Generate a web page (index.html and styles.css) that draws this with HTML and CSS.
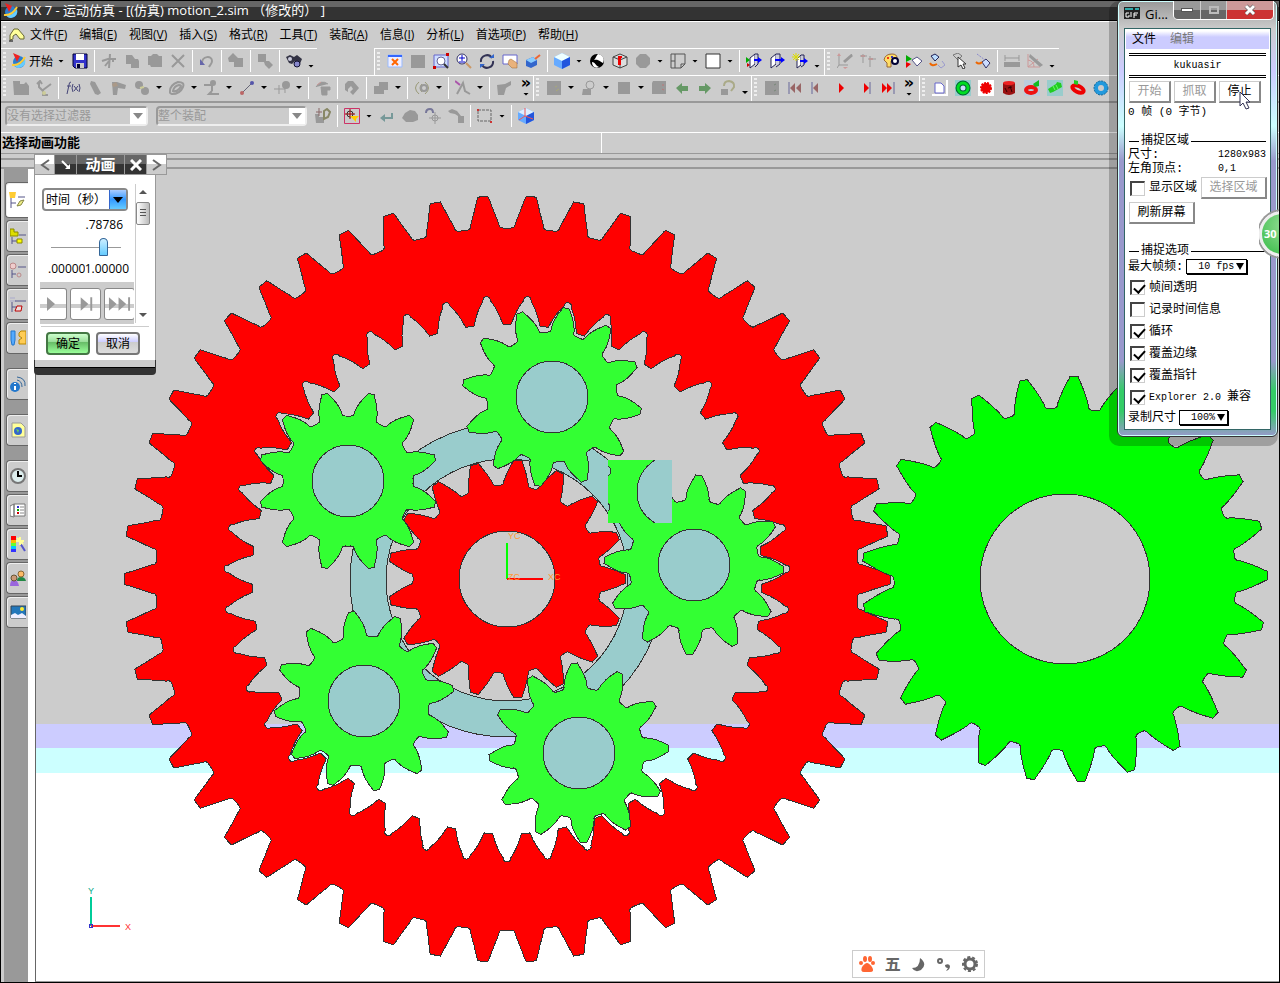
FILE: index.html
```
<!DOCTYPE html>
<html lang="zh-CN">
<head>
    <meta charset="UTF-8">
    <meta name="viewport" content="width=device-width, initial-scale=1.0">
    <title>NX 7 - 运动仿真</title>
    <link rel="stylesheet" href="styles.css">
</head>
<body>

    <header class="title-bar">
        <svg class="logo" viewBox="0 0 16 16"><circle cx="8" cy="9" r="6" fill="#2a7fd0"/><path d="M3 11q6 3 11-5q2 7-6 9q-4 0-5-4z" fill="#6cf"/><path d="M1 12q8 1 13-8" fill="none" stroke="#fc3" stroke-width="2"/><path d="M2 0l7 3-3 6z" fill="#e22"/></svg>
        <span>NX 7 - 运动仿真 - [(仿真) motion_2.sim （修改的） ]</span>
    </header>

    <nav class="menu-bar">
        <i class="grip"></i>
        <svg class="menu-icon" viewBox="0 0 18 16"><path d="M2 13V8l4-6h4l6 7v3h-4l-4-5-3 2v3z" fill="#ff9" stroke="#663"/><path d="M1 14h4" stroke="#000"/></svg>
        <a href="#">文件(<u>F</u>)</a>
        <a href="#">编辑(<u>E</u>)</a>
        <a href="#">视图(<u>V</u>)</a>
        <a href="#">插入(<u>S</u>)</a>
        <a href="#">格式(<u>R</u>)</a>
        <a href="#">工具(<u>T</u>)</a>
        <a href="#">装配(<u>A</u>)</a>
        <a href="#">信息(<u>I</u>)</a>
        <a href="#">分析(<u>L</u>)</a>
        <a href="#">首选项(<u>P</u>)</a>
        <a href="#">帮助(<u>H</u>)</a>
    </nav>

    <!-- Barra estándar, vista y utilidades -->
    <div class="toolbar-row">
        <div class="toolbar toolbar-standard">
            <i class="grip"></i>
            <button class="start"><svg viewBox="0 0 16 16"><circle cx="8" cy="9" r="6" fill="#2a7fd0"/><path d="M3 11q6 3 11-5q2 7-6 9q-4 0-5-4z" fill="#6cf"/><path d="M1 12q8 1 13-8" fill="none" stroke="#fc3" stroke-width="2"/><path d="M2 0l7 3-3 6z" fill="#e22"/></svg>开始<i class="caret"></i></button>
            <button class="tool" aria-label="保存"><svg viewBox="0 0 16 16"><path d="M1 1h14v14H3l-2-2z" fill="#33c" stroke="#003"/><path d="M4 1h8v6H4z" fill="#fff"/><path d="M4 10h8v5H4z" fill="#ccc"/><path d="M5 11h3v4H5z" fill="#003"/></svg></button>
            <i class="sep"></i>
            <button class="tool" aria-label="剪切"><svg viewBox="0 0 16 16"><path d="M9 1L8 15M1 8l6-2h8M8 8l-4 5M12 5v4" stroke="#999" stroke-width="2" fill="none"/></svg></button>
            <button class="tool" aria-label="复制"><svg viewBox="0 0 16 16"><path d="M2 2h6l3 4h3l1 2v7H7v-4H2z" fill="#999"/></svg></button>
            <button class="tool" aria-label="粘贴"><svg viewBox="0 0 16 16"><path d="M1 3h3l2-2h4l2 2h3v11H4l-1-2H1z" fill="#999"/></svg></button>
            <button class="tool" aria-label="删除"><svg viewBox="0 0 16 16"><path d="M2 2l12 12M14 2L2 14" stroke="#999" stroke-width="2"/></svg></button>
            <i class="sep"></i>
            <button class="tool" aria-label="撤消"><svg viewBox="0 0 16 16"><path d="M3 10c0-7 10-8 10-2 0 3-2 4-3 6" stroke="#999" stroke-width="2" fill="none"/><path d="M1 6v6h5z" fill="#66a"/></svg></button>
            <i class="sep"></i>
            <button class="tool" aria-label="移动对象"><svg viewBox="0 0 16 16"><path d="M0 5l5-5 5 5h5v9H6V9H1z" fill="#999"/></svg></button>
            <i class="sep"></i>
            <button class="tool" aria-label="变换"><svg viewBox="0 0 16 16"><path d="M1 1h8v7h3l4 4-4 4-4-4-1-3H1z" fill="#999"/></svg></button>
            <i class="sep"></i>
            <button class="tool" aria-label="查找"><svg viewBox="0 0 16 16"><path d="M0 4l4-2 4 2 3-2 5 4-3 7-3-1-1-4-3 3-3-1z" fill="#334"/><circle cx="11" cy="11" r="3" fill="#88c" stroke="#113"/><circle cx="4" cy="6" r="2" fill="#ccd"/></svg></button>
            <i class="caret low"></i>
        </div>
        <div class="toolbar toolbar-view">
            <i class="grip"></i>
            <button class="tool" aria-label="适合窗口"><svg viewBox="0 0 16 16"><path d="M1 2h14v12H1z" fill="#eef" stroke="#9bf"/><path d="M1 2h14v2H1z" fill="#36f"/><path d="M5 6l6 6M11 6l-6 6" stroke="#f60" stroke-width="2"/></svg></button>
            <button class="tool" aria-label="适合选择"><svg viewBox="0 0 16 16"><path d="M1 2h14v13H1z" fill="#999"/></svg></button>
            <button class="tool" aria-label="缩放"><svg viewBox="0 0 16 16"><path d="M1 2h14v12H1z" fill="#cdf" stroke="#66c"/><circle cx="8" cy="8" r="4" fill="#fff" stroke="#669"/><path d="M11 11l4 4" stroke="#333" stroke-width="2"/><path d="M0 13h3v3H0zM13 0h3v3h-3z" fill="#c00"/></svg></button>
            <button class="tool" aria-label="放大缩小"><svg viewBox="0 0 16 16"><circle cx="6" cy="6" r="5" fill="#fff" stroke="#336"/><path d="M3 5h6M6 2v6M3 9h6" stroke="#00c"/><path d="M10 10l5 5" stroke="#c96" stroke-width="2"/></svg></button>
            <button class="tool" aria-label="旋转"><svg viewBox="0 0 16 16"><path d="M2 9a6 6 0 0 1 11-4M14 8a6 6 0 0 1-11 4" fill="none" stroke="#335" stroke-width="2"/><path d="M10 5h5V1zM1 11h5l-5 4z" fill="#36c"/></svg></button>
            <button class="tool" aria-label="平移"><svg viewBox="0 0 16 16"><path d="M1 2h14v9H1z" fill="#fff" stroke="#66c"/><path d="M7 7l2-1 3 2 3 2v5h-5l-4-4z" fill="#e9b27c" stroke="#963" stroke-width=".5"/></svg></button>
            <button class="tool" aria-label="透视"><svg viewBox="0 0 16 16"><path d="M1 7l7-3 4 3v5l-6 3-5-2z" fill="#36c"/><path d="M1 7l7-3 4 3-6 3z" fill="#8cf"/><path d="M10 6l5-4" stroke="#e63" stroke-width="2"/></svg></button>
            <i class="sep"></i>
            <button class="tool" aria-label="着色"><svg viewBox="0 0 16 16"><path d="M0 4l8-4 8 4v8l-8 4-8-4z" fill="#6af"/><path d="M0 4l8-4 8 4-8 4z" fill="#eff"/><path d="M8 8l8-4v8l-8 4z" fill="#25d"/></svg></button><i class="caret"></i>
            <button class="tool" aria-label="面分析"><svg viewBox="0 0 16 16"><circle cx="8" cy="8" r="7" fill="#000"/><path d="M9 1c5 1 7 5 5 9-3-1-4-4-9-3 2-2 2-4 4-6zM3 9c3 0 3 3 7 5-4 2-7-1-7-5z" fill="#fff"/></svg></button>
            <button class="tool" aria-label="定向视图"><svg viewBox="0 0 16 16"><path d="M1 4l7-3 7 3v8l-7 3-7-3zM1 4l7 3 7-3M8 7v8" fill="#ddd" stroke="#444"/><path d="M6 3h4v2H9v7H6z" fill="#e00"/></svg></button>
            <button class="tool" aria-label="渲染样式"><svg viewBox="0 0 16 16"><path d="M1 5l4-4h6l4 4v6l-4 4H5l-4-4z" fill="#999"/></svg></button><i class="caret"></i>
            <button class="tool" aria-label="布局"><svg viewBox="0 0 16 16"><path d="M1 1h14v10l-4 4H1zM5 1v14M1 8h4M11 15v-4h4" fill="#ccc" stroke="#555"/></svg></button><i class="caret"></i>
            <button class="tool" aria-label="背景"><svg viewBox="0 0 16 16"><path d="M1 1h14v14H1z" fill="#fff" stroke="#333"/></svg></button><i class="caret"></i>
            <i class="sep"></i>
            <button class="tool" aria-label="剪切截面"><svg viewBox="0 0 16 16"><path d="M4 5l5-4v10l-5 4z" fill="#fff" stroke="#225"/><path d="M9 1h3v10l-3 3" fill="#ccd" stroke="#225"/><path d="M8 7h5" stroke="#00f" stroke-width="2"/><path d="M12 4l4 3-4 3z" fill="#00f"/><path d="M0 4l4 3-4 3z" fill="#0a0"/><path d="M1 10l3 2-3 2z" fill="#c00"/></svg></button>
            <button class="tool" aria-label="编辑截面"><svg viewBox="0 0 16 16"><path d="M2 5l5-4v10l-5 4z" fill="#fff" stroke="#225"/><path d="M7 1h4v10l-4 3" fill="#ccd" stroke="#225"/><path d="M6 7h6" stroke="#00f" stroke-width="2"/><path d="M12 4l4 3-4 3z" fill="#00f"/></svg></button>
            <button class="tool" aria-label="新建截面"><svg viewBox="0 0 16 16"><path d="M5 6l4-4v10l-4 3z" fill="#fff" stroke="#225"/><path d="M9 2h3v10l-3 2" fill="#ccd" stroke="#225"/><path d="M8 8h5" stroke="#00f" stroke-width="2"/><path d="M12 5l4 3-4 3z" fill="#00f"/><path d="M4 0v8M0 4h8M1 1l6 6M7 1L1 7" stroke="#dd0"/></svg></button>
            <i class="caret low"></i>
        </div>
        <div class="toolbar toolbar-utility">
            <i class="grip"></i>
            <button class="tool" aria-label="WCS 动态"><svg viewBox="0 0 16 16"><path d="M2 3v9h9M2 12l-2 3M8 9l7-8" fill="none" stroke="#999"/><path d="M6 8l8-7 2 2-8 7z" fill="#999"/><path d="M0 3h4L2 0zM6 14h5l-3 2z" fill="#c99"/></svg></button>
            <button class="tool" aria-label="WCS 原点"><svg viewBox="0 0 16 16"><path d="M0 3h7M3 10V1M8 6h8M10 3v11" fill="none" stroke="#999"/><path d="M1 3h4M9 6h4" stroke="#b99" stroke-width="2"/></svg></button>
            <button class="tool" aria-label="对象显示"><svg viewBox="0 0 16 16"><path d="M1 7q1-6 8-6 5 0 5 4l-6 3v6H4v-4z" fill="#fd6" stroke="#963"/><circle cx="12" cy="8" r="3" fill="#fff" stroke="#003" stroke-width="2"/><circle cx="5" cy="5" r="1" fill="#e00"/><circle cx="9" cy="4" r="1" fill="#00c"/></svg></button>
            <button class="tool" aria-label="隐藏"><svg viewBox="0 0 16 16"><path d="M0 2l6 4-6 3z" fill="#0a0"/><path d="M0 9l5 2-5 4z" fill="#e00"/><path d="M6 7l5-3 5 4-5 5z" fill="#fff" stroke="#558"/></svg></button>
            <button class="tool" aria-label="显示和隐藏"><svg viewBox="0 0 16 16"><path d="M2 3l4-2 4 3-4 4z" fill="#bdf" stroke="#225"/><path d="M1 10q2 4 7 1" fill="none" stroke="#e60" stroke-width="2"/><path d="M9 12l3 3 4-3-3-4" fill="none" stroke="#99c"/></svg></button>
            <button class="tool" aria-label="选择"><svg viewBox="0 0 16 16"><path d="M1 2l5-2 4 3-4 4z" fill="#ccc" stroke="#777"/><path d="M6 4v10l3-2 2 4 2-1-2-4h3z" fill="#fff" stroke="#333"/></svg></button>
            <button class="tool" aria-label="显示"><svg viewBox="0 0 16 16"><path d="M7 9l4-3 4 4-4 5z" fill="#cdf" stroke="#336"/><path d="M1 9q3 3 6 0" fill="none" stroke="#e60" stroke-width="2"/><path d="M2 1l8 6" stroke="#88c" stroke-dasharray="2 1"/></svg></button>
            <i class="sep"></i>
            <button class="tool" aria-label="测量距离"><svg viewBox="0 0 16 16"><path d="M0 9h16v5H0z" fill="#999"/><path d="M1 5h14M1 2v6M15 2v6" stroke="#999"/></svg></button>
            <button class="tool" aria-label="测量角度"><svg viewBox="0 0 16 16"><path d="M1 1v13h12M1 7q6 1 6 7M1 14L11 6" fill="none" stroke="#c99"/><path d="M3 1l13 11-3 2L2 4z" fill="#999"/></svg></button>
            <i class="caret low"></i>
        </div>
    </div>

    <!-- Barra de movimiento, modelado y animación -->
    <div class="toolbar-row">
        <div class="toolbar toolbar-motion">
            <i class="grip"></i>
            <button class="tool" aria-label="环境"><svg viewBox="0 0 16 16"><path d="M0 1h7v3h4l2-2 3 4v9H1z" fill="#999"/></svg></button>
            <button class="tool" aria-label="仿真"><svg viewBox="0 0 16 16"><path d="M1 4l3-3 2 3M3 2v5l4 4v4h5M7 10l8-6" fill="none" stroke="#999" stroke-width="2"/><circle cx="8" cy="13" r="2" fill="#cc9"/></svg></button>
            <i class="sep"></i>
            <button class="tool" aria-label="函数"><svg viewBox="0 0 16 16"><path d="M6 2Q4 2 4 5L2 14M2 6h4M8 4q-2 4 0 8M14 4q2 4 0 8M9 6l4 5M13 6l-4 5" fill="none" stroke="#447"/></svg></button>
            <button class="tool" aria-label="连杆"><svg viewBox="0 0 16 16"><path d="M3 1l4 1 6 11-3 2-3-1L2 4z" fill="#999"/></svg></button>
            <button class="tool" aria-label="运动副"><svg viewBox="0 0 16 16"><path d="M1 2h5l9 3-1 4-7-1-1 7H2z" fill="#999"/><path d="M1 4l4-2 2 4-5 1z" fill="#a98"/></svg></button>
            <button class="tool" aria-label="齿轮副"><svg viewBox="0 0 16 16"><circle cx="5" cy="5" r="4" fill="#999"/><circle cx="11" cy="11" r="4" fill="#999"/><path d="M6 8l4-1" stroke="#cc9" stroke-width="2"/></svg></button><i class="caret"></i>
            <button class="tool" aria-label="弹簧"><svg viewBox="0 0 16 16"><path d="M1 11q0-6 8-9 7 0 5 5-3 7-11 7-3-1-2-3zM4 11q1-5 6-6 4 0 0 4-3 3-6 2z" fill="none" stroke="#999" stroke-width="2"/></svg></button><i class="caret"></i>
            <button class="tool" aria-label="接触"><svg viewBox="0 0 16 16"><path d="M8 3v8M0 5h8M8 11l-3 3h10" fill="none" stroke="#999" stroke-width="2"/><circle cx="9" cy="3" r="3" fill="#999"/></svg></button><i class="caret"></i>
            <button class="tool" aria-label="标记"><svg viewBox="0 0 16 16"><path d="M3 13L13 3" stroke="#667"/><circle cx="3" cy="13" r="2" fill="#b66"/><circle cx="13" cy="3" r="2" fill="#55a"/></svg></button><i class="caret"></i>
            <button class="tool" aria-label="载荷"><svg viewBox="0 0 16 16"><path d="M0 9h11M5 5v9M11 5v8" stroke="#999"/><circle cx="12" cy="5" r="4" fill="#999"/></svg></button><i class="caret"></i>
            <i class="sep"></i>
            <button class="tool" aria-label="驱动"><svg viewBox="0 0 16 16"><path d="M1 7q5-8 12-3M6 7h9v3h-3v5H7z" fill="#999" stroke="#999"/><path d="M2 5l4-3" stroke="#c99"/></svg></button>
            <i class="sep"></i>
            <button class="tool" aria-label="解算"><svg viewBox="0 0 16 16"><path d="M1 4l3-3h5l6 7-6 7-3-3 3-3-2-3-3 3v3l-3-2z" fill="#999"/></svg></button>
            <i class="sep"></i>
            <button class="tool" aria-label="求和"><svg viewBox="0 0 16 16"><path d="M1 6h5V2h9v8h-4v4H1z" fill="#999"/></svg></button><i class="caret"></i>
            <i class="sep"></i>
            <button class="tool" aria-label="动画"><svg viewBox="0 0 16 16"><path d="M5 2q-7 6 0 12M8 4q-4 4 0 8M11 2q7 6 0 12" fill="none" stroke="#997" stroke-width="1"/><circle cx="10" cy="8" r="3" fill="none" stroke="#999" stroke-width="2"/></svg></button><i class="caret"></i>
            <i class="sep"></i>
            <button class="tool" aria-label="干涉"><svg viewBox="0 0 16 16"><path d="M2 14L8 3l2 8 5 3" fill="none" stroke="#999" stroke-width="2"/><path d="M0 1l5 4" stroke="#a5a" stroke-width="2"/></svg></button><i class="caret"></i>
            <i class="sep"></i>
            <button class="tool" aria-label="轨迹"><svg viewBox="0 0 16 16"><path d="M1 5l8-1 6-3v4l-5 3-2 7H2z" fill="#999"/></svg></button>
            <i class="chevron">»</i>
        </div>
        <div class="toolbar toolbar-model">
            <i class="grip"></i>
            <button class="tool" aria-label="视图截面"><svg viewBox="0 0 16 16"><path d="M1 1h14v14H1z" fill="#999"/><path d="M9 7l2-1M10 11l3-2" stroke="#aa7"/></svg></button><i class="caret"></i>
            <button class="tool" aria-label="定位"><svg viewBox="0 0 16 16"><circle cx="9" cy="5" r="4" fill="none" stroke="#999"/><path d="M2 9h8v6H1z" fill="#999"/></svg></button><i class="caret"></i>
            <button class="tool" aria-label="图层"><svg viewBox="0 0 16 16"><path d="M2 2h12v12H2z" fill="#999"/></svg></button><i class="caret"></i>
            <button class="tool" aria-label="动画控制"><svg viewBox="0 0 16 16"><path d="M2 1h13v13H1V3z" fill="#999"/><path d="M12 4v2M11 9l2 1" stroke="#b77"/></svg></button>
            <button class="tool" aria-label="上一步"><svg viewBox="0 0 16 16"><path d="M2 8l6-5v3h6v5H8v3z" fill="#696"/></svg></button>
            <button class="tool" aria-label="下一步"><svg viewBox="0 0 16 16"><path d="M14 8L8 3v3H2v5h6v3z" fill="#696"/></svg></button>
            <button class="tool" aria-label="返回模型"><svg viewBox="0 0 16 16"><path d="M4 6q0-5 5-5 6 1 5 6l-3 4" fill="none" stroke="#aa8" stroke-width="2"/><path d="M1 9h7v6H1z" fill="#999"/></svg></button>
            <i class="caret low"></i>
        </div>
        <div class="toolbar toolbar-play">
            <i class="grip"></i>
            <button class="tool" aria-label="完成动画"><svg viewBox="0 0 16 16"><path d="M1 1h14v14H1z" fill="#999"/><path d="M10 5l2-1M10 11l2-1" stroke="#787"/></svg></button>
            <button class="tool" aria-label="第一步"><svg viewBox="0 0 16 16"><path d="M2 2v12" stroke="#669"/><path d="M8 3v10L3 8zM14 3v10L9 8z" fill="#966"/></svg></button>
            <button class="tool" aria-label="上一帧"><svg viewBox="0 0 16 16"><path d="M2 2v12" stroke="#669"/><path d="M8 3v10L3 8z" fill="#966"/></svg></button>
            <button class="tool" aria-label="播放"><svg viewBox="0 0 16 16"><path d="M6 3v10l5-5z" fill="#e00"/></svg></button>
            <button class="tool" aria-label="下一帧"><svg viewBox="0 0 16 16"><path d="M8 3v10l5-5z" fill="#e00"/><path d="M14 2v12" stroke="#669"/></svg></button>
            <button class="tool" aria-label="最后一步"><svg viewBox="0 0 16 16"><path d="M3 3v10l5-5zM8 3v10l5-5z" fill="#e00"/><path d="M15 2v12" stroke="#669"/></svg></button>
            <i class="chevron">»</i>
        </div>
        <div class="toolbar toolbar-gears">
            <i class="grip"></i>
            <button class="tool" aria-label="新建"><svg viewBox="0 0 16 16"><path d="M0 0h16v16H0z" fill="#fff"/><path d="M0 0h14v14H0z" fill="#ccc"/><path d="M3 3h6l3 3v7H3z" fill="#fff" stroke="#66c"/></svg></button>
            <button class="tool" aria-label="圆柱齿轮"><svg viewBox="0 0 16 16"><path d="M0 0h16v16H0z" fill="#9cc"/><circle cx="8" cy="8" r="5" fill="#cdf" stroke="#063" stroke-width="5"/><circle cx="8" cy="8" r="5" fill="none" stroke="#0d2" stroke-width="3"/></svg></button>
            <button class="tool" aria-label="直齿轮"><svg viewBox="0 0 16 16"><path d="M0 0h16v16H0z" fill="#fff"/><circle cx="8" cy="8" r="5" fill="#e00" stroke="#e00" stroke-width="2" stroke-dasharray="2 1"/></svg></button>
            <button class="tool" aria-label="圆柱"><svg viewBox="0 0 16 16"><path d="M2 3v10q6 4 12 0V3z" fill="#911"/><ellipse cx="8" cy="3" rx="6" ry="2" fill="#e22"/><path d="M4 8l2 4M9 6l2 6M7 8l4-1" stroke="#300"/></svg></button>
            <button class="tool" aria-label="锥齿轮"><svg viewBox="0 0 16 16"><path d="M0 0h16v16H0z" fill="#bcd"/><ellipse cx="7" cy="10" rx="5" ry="3" fill="none" stroke="#e11" stroke-width="4"/><path d="M9 4l6-4v6l-4 1z" fill="#1b2"/></svg></button>
            <button class="tool" aria-label="蜗杆"><svg viewBox="0 0 16 16"><path d="M0 0h16v16H0z" fill="#9cc"/><path d="M1 9l8-5 1-2 4 1 1 4-9 5-3 1z" fill="#2c2"/><path d="M6 6l2 4M9 5l2 4" stroke="#6f6"/></svg></button>
            <button class="tool" aria-label="蜗轮"><svg viewBox="0 0 16 16"><ellipse cx="8" cy="9" rx="6" ry="3" fill="none" stroke="#e00" stroke-width="4" transform="rotate(25 8 9)"/><path d="M4 0l4 1v4L4 4z" fill="#2c2"/></svg></button>
            <button class="tool" aria-label="内齿轮"><svg viewBox="0 0 16 16"><circle cx="8" cy="8" r="5" fill="none" stroke="#29d" stroke-width="4"/><circle cx="8" cy="8" r="7" fill="none" stroke="#169" stroke-dasharray="2 1"/></svg></button>
        </div>
    </div>

    <div class="filter-bar">
        <div class="combo combo-small"><select aria-label="类型过滤器" disabled><option>没有选择过滤器</option></select></div>
        <div class="combo"><select aria-label="选择范围" disabled><option>整个装配</option></select></div>
        <button class="tool" aria-label="部件内"><svg viewBox="0 0 16 16"><path d="M0 6h4v3h5v6H1z" fill="#999"/><path d="M4 0v8M1 4h6" stroke="#866"/><path d="M9 3l3-2 3 3-2 5-4 2z" fill="none" stroke="#886" stroke-width="2"/></svg></button>
        <i class="sep"></i>
        <button class="tool" aria-label="捕捉点"><svg viewBox="0 0 16 16"><path d="M.5.5h15v15H.5z" fill="none" stroke="#c36"/><circle cx="6" cy="6" r="3" fill="none" stroke="#333"/><path d="M6 1v10M1 6h10" stroke="#900"/><path d="M6 8h9l-3 3v3l-3-3z" fill="#fc0"/></svg></button><i class="caret"></i>
        <button class="tool" aria-label="返回"><svg viewBox="0 0 16 16"><path d="M13 5v5H5" fill="none" stroke="#799" stroke-width="2"/><path d="M6 6v8l-5-4z" fill="#799"/></svg></button>
        <button class="tool" aria-label="着色边"><svg viewBox="0 0 16 16"><path d="M0 10l3-5 5-3 5 1 3 4v5l-5 2H4z" fill="#999"/></svg></button>
        <button class="tool" aria-label="点构造"><svg viewBox="0 0 16 16"><path d="M1 5q0-4 4-4 3 0 3 4" fill="none" stroke="#779" stroke-width="2"/><circle cx="10" cy="10" r="3" fill="none" stroke="#999"/><path d="M10 4v12M4 10h12" stroke="#999"/></svg></button>
        <button class="tool" aria-label="路径"><svg viewBox="0 0 16 16"><path d="M0 3l4-2 5 2 4 5h3v7h-6V8L7 6 2 5z" fill="#999"/></svg></button>
        <i class="sep"></i>
        <button class="tool" aria-label="矩形选择"><svg viewBox="0 0 16 16"><path d="M1 2h13v11H1z" fill="none" stroke="#666" stroke-dasharray="3 1"/><path d="M0 1h2v2H0zM13 13h2v2h-2z" fill="#c33"/></svg></button><i class="caret"></i>
        <i class="sep"></i>
        <button class="tool" aria-label="实体"><svg viewBox="0 0 16 16"><path d="M0 4l8-4 8 4v8l-8 4-8-4z" fill="#6af"/><path d="M0 4l8-4 8 4-8 4z" fill="#def"/><path d="M8 8l8-4v8l-8 4z" fill="#25d"/><path d="M7 0v8l8 3M7 8l-6 4" fill="none" stroke="#e55"/></svg></button>
    </div>

    <div class="prompt-bar">
        <strong>选择动画功能</strong>
        <span class="status"></span>
    </div>

    <main class="workspace">
        <aside class="resource-bar">
            <button class="tab active" aria-label="运动导航器"><svg viewBox="0 0 16 16"><path d="M0 0h7l-1 6H1z" fill="#fc3"/><path d="M2 6v10M2 11h5M9 5h7" stroke="#558" fill="none"/><path d="M8 14l3-5 4-1-3 5z" fill="#ee8" stroke="#884"/></svg></button>
            <button class="tab" aria-label="装配导航器"><svg viewBox="0 0 16 16"><path d="M0 1h4v3h4v4H0z" fill="#dd0" stroke="#880"/><path d="M2 9v7M2 13h5M9 7h7" stroke="#558" fill="none"/><path d="M7 11h5v4H7z" fill="#ff0" stroke="#880"/></svg></button>
            <button class="tab" aria-label="约束导航器"><svg viewBox="0 0 16 16"><circle cx="3" cy="4" r="3" fill="#ecc" stroke="#b88"/><path d="M2 8v8M2 12h4M8 5h8" stroke="#558" fill="none"/><circle cx="9" cy="13" r="2" fill="none" stroke="#b88"/></svg></button>
            <button class="tab" aria-label="部件导航器"><svg viewBox="0 0 16 16"><path d="M0 2h5M0 5h6" stroke="#aac"/><path d="M2 6v10M2 11h4M5 5h11" stroke="#558" fill="none"/><path d="M5 15l2-5h5l-1 5z" fill="#edd" stroke="#b00"/></svg></button>
            <button class="tab" aria-label="重用库"><svg viewBox="0 0 16 16"><path d="M1 1h4v9l-1 5H2l-1-5z" fill="#5af" stroke="#27c"/><path d="M9 3l2-2h5v13H9v-4l3-2-3-2z" fill="#fc5" stroke="#b80"/></svg></button>
            <button class="tab spaced" aria-label="HD3D"><svg viewBox="0 0 16 16"><circle cx="5" cy="11" r="5" fill="#27c"/><path d="M5 7v1M5 10v4" stroke="#fff" stroke-width="2"/><path d="M7 4q5 1 5 7M7 1q9 1 8 9" fill="none" stroke="#369"/></svg></button>
            <button class="tab spaced" aria-label="浏览器"><svg viewBox="0 0 16 16"><path d="M2 1h9l4 4v10H2z" fill="#ff9" stroke="#999"/><circle cx="8" cy="9" r="4" fill="#36c"/><path d="M6 7l3 1-1 3z" fill="#6c6"/></svg></button>
            <button class="tab spaced" aria-label="历史记录"><svg viewBox="0 0 16 16"><circle cx="8" cy="8" r="7" fill="#dee" stroke="#777" stroke-width="2"/><path d="M8 3v5h4" stroke="#000" stroke-width="2" fill="none"/></svg></button>
            <button class="tab" aria-label="系统材料"><svg viewBox="0 0 16 16"><path d="M0 4l4-2v13l-4-1zM4 2h11v12H4z" fill="#fff" stroke="#777"/><path d="M7 4h2v2H7z" fill="#33c"/><path d="M7 7h2v2H7z" fill="#0a0"/><path d="M7 10h2v2H7z" fill="#c00"/><path d="M10 5h4M10 8h4M10 11h4" stroke="#888"/></svg></button>
            <button class="tab" aria-label="制图模板"><svg viewBox="0 0 16 16"><path d="M1 0h5v4H1z" fill="#f00"/><path d="M1 4h5v3H1z" fill="#fb0"/><path d="M1 7h5v3H1z" fill="#6f3"/><path d="M1 10h5v3H1z" fill="#0cf"/><path d="M1 13h5v3H1z" fill="#33f"/><path d="M10 7l5 8" stroke="#55c" stroke-width="2"/><path d="M10 1v8M6 5h8M7 2l6 6" stroke="#ff9" stroke-width="2"/></svg></button>
            <button class="tab" aria-label="角色"><svg viewBox="0 0 16 16"><path d="M7 11q0-4 4-4t5 4z" fill="#284"/><circle cx="11" cy="4" r="3" fill="#fb6" stroke="#863"/><path d="M0 16q0-6 4-6t5 6z" fill="#96d"/><circle cx="4" cy="8" r="3" fill="#c97" stroke="#653"/></svg></button>
            <button class="tab" aria-label="场景"><svg viewBox="0 0 16 16"><path d="M1 2h15v12H1z" fill="#27b" stroke="#345"/><circle cx="12" cy="5" r="2" fill="#fe3"/><path d="M1 14v-3l4-2 3 2 4-2 4 3v2z" fill="#eef"/></svg></button>
        </aside>

        <section class="viewport">
            <svg id="scene" class="scene"></svg>

            <form class="dialog">
                <div class="dialog-head">
                    <button type="button" aria-label="上一个" class="light"><svg viewBox="0 0 12 12"><path d="M10 1L3 6l7 5" fill="none" stroke="#666" stroke-width="2"/></svg></button>
                    <button type="button" aria-label="固定"><svg viewBox="0 0 12 12"><path d="M2 2l7 7" stroke="#fff" stroke-width="2"/><path d="M10 5v5H5z" fill="#fff"/></svg></button>
                    <h1>动画</h1>
                    <button type="button" aria-label="关闭"><svg viewBox="0 0 12 12"><path d="M1 1l10 10M11 1L1 11" stroke="#fff" stroke-width="3"/></svg></button>
                    <button type="button" aria-label="下一个" class="light"><svg viewBox="0 0 12 12"><path d="M2 1l7 5-7 5" fill="none" stroke="#666" stroke-width="2"/></svg></button>
                </div>
                <div class="dialog-body">
                    <div class="dialog-main">
                        <div class="mode"><select aria-label="滑动模式"><option>时间（秒）</option></select></div>
                        <output for="time">.78786</output>
                        <input type="range" id="time" aria-label="时间" min="0" max="1" step="any" value="0.79">
                        <div class="limits"><span>.00000</span><span>1.00000</span></div>
                        <div class="player">
                            <button type="button" aria-label="播放"><svg viewBox="0 0 24 16"><path d="M8 1v14l8-7z" fill="#999"/></svg></button>
                            <button type="button" aria-label="单步"><svg viewBox="0 0 24 16"><path d="M7 1v14l8-7zM17 1h2v14h-2z" fill="#999"/></svg></button>
                            <button type="button" aria-label="最后"><svg viewBox="0 0 24 16"><path d="M1 1v14l8-7zM11 1v14l8-7zM21 1h2v14h-2z" fill="#999"/></svg></button>
                        </div>
                    </div>
                    <div class="scroll"><i class="up"></i><i class="thumb"></i><i class="down"></i></div>
                </div>
                <div class="dialog-actions">
                    <button type="submit" class="ok">确定</button>
                    <button type="button">取消</button>
                </div>
                <div class="dialog-foot"></div>
            </form>

            <div class="ime">
                <svg viewBox="0 0 16 16"><g fill="#f63"><ellipse cx="2" cy="7" rx="2" ry="2"/><ellipse cx="6" cy="3" rx="2" ry="3"/><ellipse cx="11" cy="3" rx="2" ry="3"/><ellipse cx="14" cy="7" rx="2" ry="2"/><path d="M8 7q2 0 5 4 3 5-2 5H5q-4 0-2-5 3-4 5-4z"/></g></svg>
                <b>五</b>
                <svg viewBox="0 0 16 16"><path d="M10 2q8 6 1 12-6 3-9-2 8 0 8-10z" fill="#666"/></svg>
                <svg viewBox="0 0 16 16"><circle cx="4" cy="5" r="2" fill="none" stroke="#666" stroke-width="2"/><path d="M9 9q4-2 5 1 0 4-4 5l2-3q-3 0-3-3z" fill="#666"/></svg>
                <svg viewBox="0 0 16 16"><circle cx="8" cy="8" r="5" fill="none" stroke="#666" stroke-width="3"/><circle cx="8" cy="8" r="7" fill="none" stroke="#666" stroke-width="2" stroke-dasharray="3 2"/></svg>
            </div>
        </section>
    </main>

    <!-- Ventana flotante de captura -->
    <div class="gif-window">
        <div class="gif-title">
            <svg viewBox="0 0 16 16"><path d="M0 2h16v12H0z" fill="#222"/><path d="M1 4h8M11 4h4" stroke="#3aa" stroke-width="2"/><path d="M5 8H2v4h3v-2M7 7v5M14 8h-4v5M10 10h3" fill="none" stroke="#fff"/></svg>
            <span>Gi...</span>
            <div class="gif-controls">
                <button aria-label="最小化"><i class="min"></i></button>
                <button aria-label="最大化"><i class="max"></i></button>
                <button aria-label="关闭" class="close"><svg viewBox="0 0 12 12"><path d="M2 2l8 8M10 2l-8 8" stroke="#555" stroke-width="4"/><path d="M2 2l8 8M10 2l-8 8" stroke="#fff" stroke-width="3"/></svg></button>
            </div>
        </div>
        <div class="gif-client">
            <div class="gif-menu"><a href="#">文件</a><a href="#" class="off">编辑</a></div>
            <div class="gif-name">kukuasir</div>
            <div class="gif-buttons">
                <button disabled>开始</button>
                <button disabled>抓取</button>
                <button>停止</button>
            </div>
            <p class="frames">0 帧 (0 字节)</p>
            <h2>捕捉区域</h2>
            <dl>
                <dt>尺寸:</dt><dd>1280x983</dd>
                <dt>左角顶点:</dt><dd>0,1</dd>
            </dl>
            <div class="area-row">
                <label><input type="checkbox">显示区域</label>
                <button disabled>选择区域</button>
            </div>
            <button class="refresh">刷新屏幕</button>
            <h2>捕捉选项</h2>
            <div class="pick-row"><label for="fps">最大帧频:</label><span class="pick"><select id="fps"><option>10 fps</option></select></span></div>
            <div class="options">
                <label><input type="checkbox" checked>帧间透明</label>
                <label><input type="checkbox">记录时间信息</label>
                <label><input type="checkbox" checked>循环</label>
                <label><input type="checkbox" checked>覆盖边缘</label>
                <label><input type="checkbox" checked>覆盖指针</label>
                <label><input type="checkbox" checked><span><small>Explorer 2.0 </small>兼容</span></label>
            </div>
            <div class="pick-row"><label for="scale">录制尺寸</label><span class="pick small"><select id="scale"><option>100%</option></select></span></div>
        </div>
        <svg class="cursor" viewBox="0 0 12 19"><path d="M1 1v14l3-3 3 6 3-1-3-6h4z" fill="#fff" stroke="#335"/></svg>
    </div>
    <div class="badge-clip"><div class="badge">30</div></div>

    <script src="gears.js"></script>
</body>
</html>
```
FILE: styles.css
```
* {
    box-sizing: border-box;
}

body {
    margin: 0;
    height: 100vh;
    display: flex;
    flex-direction: column;
    position: relative;
    overflow: hidden;
    background-color: #ccc;
    border: 1px solid #000;
    font-family: "Open Sans", "Noto Sans CJK SC", sans-serif;
    font-size: 12px;
    color: #000;
}

button, select, input {
    font: inherit;
    color: inherit;
    margin: 0;
}

button {
    padding: 0;
    border: none;
    background: none;
}

a {
    color: inherit;
    text-decoration: none;
}

/* Barra de título */
.title-bar {
    flex: none;
    height: 20px;
    display: flex;
    align-items: center;
    gap: 5px;
    padding-left: 2px;
    background: linear-gradient(#666 6px, #333 6px);
    border-bottom: 1px solid #000;
    color: #fff;
    font-size: 13px;
    line-height: 19px;
    white-space: pre;
}

.logo {
    width: 16px;
    height: 16px;
}

/* Menú principal */
.menu-bar {
    flex: none;
    height: 27px;
    display: flex;
    align-items: center;
    gap: 12px;
    border-top: 1px solid #fff;
    line-height: 20px;
}

.menu-icon {
    width: 18px;
    height: 16px;
    margin: 0 -8px 0 -13px;
}

.grip {
    flex: none;
    width: 3px;
    height: 19px;
    margin: 0 3px 0 2px;
    background: repeating-linear-gradient(#eee 0 2px, #ccc 2px 4px);
}

/* Barras de herramientas */
.toolbar-row {
    flex: none;
    display: flex;
    height: 27px;
}

.toolbar-row + .toolbar-row {
    height: 28px;
    border-bottom: 2px solid #999;
}

.toolbar {
    display: flex;
    align-items: center;
    padding-bottom: 2px;
    border-top: 1px solid #fff;
}

.toolbar + .toolbar {
    border-left: 1px solid #fff;
}

.toolbar-standard {
    width: 316px;
    margin-right: 57px;
}

.toolbar-view {
    width: 450px;
}

.toolbar-utility {
    width: 235px;
}

.toolbar-motion {
    width: 532px;
}

.toolbar-model {
    width: 218px;
}

.toolbar-play {
    width: 168px;
}

.toolbar-gears {
    flex: 1;
}

.tool {
    flex: none;
    width: 23px;
    height: 22px;
    display: grid;
    place-items: center;
}

.tool svg, .start svg {
    flex: none;
    width: 16px;
    height: 16px;
}

.start {
    flex: none;
    display: flex;
    align-items: center;
    gap: 2px;
    width: 59px;
    padding-left: 2px;
    white-space: nowrap;
}

.sep {
    flex: none;
    width: 6px;
    height: 22px;
    border-left: 1px solid #fff;
    margin-left: 3px;
    margin-right: -3px;
}

.caret {
    flex: none;
    width: 12px;
    height: 3px;
    background: #000;
    clip-path: polygon(3px 0, 9px 0, 6px 3px);
}

.caret.low {
    margin-top: 10px;
}

.chevron {
    flex: none;
    width: 22px;
    height: 24px;
    font: bold 16px/14px "DejaVu Sans", sans-serif;
    text-align: center;
}

.chevron::after {
    content: "";
    display: block;
    height: 3px;
    margin-top: 3px;
    background: #000;
    clip-path: polygon(8px 0, 14px 0, 11px 3px);
}

/* Barra de selección */
.filter-bar {
    flex: none;
    height: 29px;
    display: flex;
    align-items: center;
    padding: 0 0 3px 4px;
}

.combo {
    position: relative;
    width: 151px;
    margin-right: 4px;
}

.combo-small {
    width: 143px;
    margin-right: 8px;
}

.combo select {
    width: 100%;
    height: 20px;
    padding: 0;
    appearance: none;
    background: #ccc;
    border: 2px solid #999;
    border-right-color: #eee;
    border-bottom-color: #eee;
    border-radius: 4px;
    color: #999;
    opacity: 1;
    line-height: 16px;
}

.combo::after {
    content: "";
    position: absolute;
    right: 2px;
    top: 2px;
    width: 16px;
    height: 16px;
    background: #fff;
}

.combo::before {
    content: "";
    position: absolute;
    z-index: 1;
    right: 5px;
    top: 7px;
    border: 5px solid transparent;
    border-top: 6px solid #888;
    border-bottom: none;
}

.prompt-bar {
    flex: none;
    height: 22px;
    display: flex;
    border-top: 1px solid #fff;
    border-bottom: 1px solid #999;
    line-height: 18px;
    padding-left: 1px;
}

.prompt-bar strong {
    width: 599px;
    font-size: 13px;
    font-weight: 700;
}

.status {
    flex: 1;
    border-left: 1px solid #fff;
}

/* Área de trabajo */
.workspace {
    flex: 1;
    min-height: 0;
    display: flex;
    margin-top: 4px;
    padding-top: 11px;
    background: linear-gradient(#999 2px, #ccc 2px 9px, #999 9px 11px, transparent 11px);
}

.resource-bar {
    flex: none;
    width: 34px;
    padding: 15px 7px 0 5px;
    display: flex;
    flex-direction: column;
    gap: 2px;
    background: linear-gradient(90deg, #ccc 3px, #999 3px 27px, #fff 27px);
}

.tab {
    height: 32px;
    flex: none;
    padding: 0 0 0 3px;
    display: flex;
    align-items: center;
    background: #ccc;
    border: 1px solid #666;
    border-right: none;
    border-radius: 4px 0 0 4px;
    box-shadow: inset 1px 1px 0 #eee;
}

.tab.active {
    height: 36px;
    margin: -2px 0 0 -1px;
    background: #fff;
}

.tab.spaced {
    margin-top: 12px;
}

.tab svg {
    flex: none;
    width: 16px;
    height: 16px;
}

.viewport {
    flex: 1;
    min-width: 0;
    position: relative;
    border-left: 1px solid #666;
    border-bottom: 1px solid #999;
    background: linear-gradient(#ccc 555px, #ccf 555px 579px, #cff 579px 604px, #fff 604px);
}

.scene {
    display: block;
    width: 100%;
    height: 100%;
}

.scene text {
    font: 9px "Liberation Sans", sans-serif;
}

/* Diálogo de animación */
.dialog {
    position: absolute;
    left: -2px;
    top: -15px;
    width: 122px;
}

.dialog-head {
    width: 133px;
    height: 21px;
    display: flex;
    gap: 1px;
    padding: 1px;
    background: #999;
}

.dialog-head button {
    width: 21px;
    display: grid;
    place-items: center;
    background: linear-gradient(#666 9px, #333 9px);
}

.dialog-head .light {
    width: 19px;
    background: linear-gradient(#fff 9px, #ccc 9px);
}

.dialog-head svg {
    width: 12px;
    height: 12px;
}

.dialog-head h1 {
    flex: 1;
    margin: 0;
    background: linear-gradient(#666 9px, #333 9px);
    color: #fff;
    font-size: 15px;
    line-height: 18px;
    text-align: center;
}

.dialog-body {
    display: flex;
    gap: 1px;
    height: 150px;
    padding: 9px 5px 0;
    background: #fff;
    border: solid #999;
    border-width: 0 1px;
}

.dialog-main {
    width: 94px;
    display: flex;
    flex-direction: column;
    overflow: hidden;
}

.mode {
    position: relative;
    width: 86px;
    margin: 4px 0 0 2px;
}

.mode select {
    display: block;
    width: 100%;
    height: 23px;
    padding: 0 2px;
    appearance: none;
    background: #fff;
    border: 2px solid #888;
    border-radius: 4px;
    font-size: 12px;
    line-height: 19px;
}

.mode::after {
    content: "";
    position: absolute;
    top: 2px;
    right: 2px;
    width: 16px;
    height: 19px;
    background: linear-gradient(#acf, #39f 50%, #6cf);
    border-left: 1px solid #36c;
}

.mode::before {
    content: "";
    position: absolute;
    z-index: 1;
    top: 9px;
    right: 5px;
    border: 5px solid transparent;
    border-top: 6px solid #000;
    border-bottom: none;
}

.dialog-main output {
    width: 83px;
    margin-top: 5px;
    text-align: right;
    line-height: 18px;
}

.dialog-main input {
    width: 70px;
    height: 18px;
    margin: 4px 0 4px 11px;
    appearance: none;
    background: linear-gradient(#999, #999) center/100% 1px no-repeat;
}

.dialog-main input::-webkit-slider-thumb {
    appearance: none;
    width: 9px;
    height: 18px;
    background: linear-gradient(#cef, #6cf);
    border: 1px solid #369;
    border-radius: 5px 5px 1px 1px;
}

.limits {
    display: flex;
    justify-content: space-between;
    width: 81px;
    margin: 0 0 4px 8px;
    line-height: 18px;
}

.limits span:last-child {
    margin-left: -8px;
    background: #fff;
}

.player {
    flex: none;
    height: 42px;
    display: flex;
    gap: 3px;
    padding: 6px 0 4px;
    margin-left: -1px;
    background: #ccc;
}

.player button {
    flex: none;
    width: 31px;
    padding: 2px 3px;
    background: linear-gradient(#fff 15px, #ccc 15px 19px, #fff 19px);
    border: 1px solid #888;
    border-radius: 3px;
}

.player button:first-child {
    width: 28px;
    padding-left: 0;
    border-left: none;
}

.player svg {
    display: block;
    width: 100%;
    height: 18px;
}

.scroll {
    flex: 1;
    display: flex;
    flex-direction: column;
    align-items: center;
    border-left: 1px solid #ccc;
    padding: 6px 0;
    margin-bottom: 2px;
}

.scroll .up, .scroll .down {
    border: 4px solid transparent;
    border-top: none;
    border-bottom: 4px solid #555;
}

.scroll .down {
    border-bottom: none;
    border-top: 4px solid #555;
    margin-top: auto;
}

.scroll .thumb {
    width: 14px;
    height: 23px;
    margin-top: 8px;
    border: 1px solid #888;
    border-radius: 2px;
    background: repeating-linear-gradient(#555 0 1px, transparent 1px 3px) center/6px 9px no-repeat, linear-gradient(90deg, #fff, #bbb);
}

.dialog-actions {
    display: flex;
    gap: 6px;
    padding: 7px 11px 5px;
    background: linear-gradient(#ccc, #ccc) center 1px/108px 1px no-repeat #fff;
    border: solid #999;
    border-width: 0 1px;
}

.dialog-actions button {
    width: 44px;
    height: 23px;
    background: linear-gradient(#fff, #ccf 8px, #ccc 8px, #ddd);
    border: 2px solid #777;
    border-radius: 4px;
    line-height: 19px;
}

.dialog-actions .ok {
    background: linear-gradient(#cfc, #9d9 8px, #6b6 8px, #9f9);
    border-color: #474;
}

.dialog-foot {
    height: 15px;
    background: linear-gradient(#ccc 7px, #000 7px 8px, #333 8px);
    border: 1px solid #333;
    border-top: none;
    border-radius: 0 0 4px 4px;
}

/* Barra del método de entrada */
.ime {
    position: absolute;
    right: 294px;
    bottom: 3px;
    width: 133px;
    height: 28px;
    display: flex;
    align-items: center;
    justify-content: space-between;
    padding: 0 6px;
    background: #fff;
    border: 1px solid #ccc;
    color: #666;
}

.ime svg {
    width: 16px;
    height: 16px;
}

.ime b {
    font-size: 16px;
    line-height: 24px;
}

/* Ventana de captura */
.gif-window {
    position: absolute;
    top: -1px;
    right: 1px;
    width: 161px;
    padding: 0 6px 6px;
    background: linear-gradient(#999 0, #ccc 28px, #ccf 70px, #cff 125px, #99c 160px, #99c 360px, #3c6 390px, #3c6 410px, #99c);
    border: 1px solid #333;
    border-radius: 6px;
    box-shadow: inset 0 0 0 1px #cff, -4px 5px 0 4px rgba(0, 0, 0, 0.22);
    font-family: "Liberation Mono", "Noto Sans CJK SC", monospace;
    font-size: 12px;
}

.gif-title {
    height: 27px;
    display: flex;
    gap: 5px;
    font: 13px/26px "Open Sans", sans-serif;
}

.gif-title > svg {
    flex: none;
    width: 16px;
    height: 16px;
    margin-top: 4px;
}

.gif-controls {
    display: flex;
    height: 19px;
    margin: 0 -3px 0 auto;
    border: 1px solid #fff;
    border-top: none;
    border-radius: 0 0 5px 5px;
    overflow: hidden;
}

.gif-controls button {
    width: 27px;
    display: grid;
    place-items: center;
    background: linear-gradient(#999 9px, #666 9px);
    border-right: 1px solid #ccc;
}

.gif-controls .close {
    width: 46px;
    background: linear-gradient(#c99 9px, #c33 9px);
    border: none;
}

.close svg {
    width: 12px;
    height: 12px;
}

.min {
    width: 12px;
    height: 4px;
    background: #fff;
    border: 1px solid #555;
}

.max {
    width: 10px;
    height: 8px;
    border: 2px solid #bbb;
}

.gif-client {
    padding: 2px 4px 3px 3px;
    background: #fff;
    border: 1px solid #366;
    line-height: 14px;
}

.gif-menu {
    display: flex;
    gap: 14px;
    height: 18px;
    margin: 0 -3px 0 -2px;
    padding-left: 6px;
    background: linear-gradient(#fff, #ccf 6px);
    line-height: 18px;
}

.gif-menu .off {
    color: #777;
}

.gif-name {
    height: 25px;
    margin: 4px 0 3px 1px;
    border: double #000;
    border-width: 3px 0;
    font-size: 10px;
    line-height: 19px;
    text-align: center;
}

.gif-buttons {
    display: flex;
    gap: 3px;
    margin-left: 1px;
}

.gif-client button {
    height: 22px;
    min-width: 42px;
    background: #fff;
    border: 1px solid #ccc;
    border-right: 2px solid #888;
    border-bottom: 2px solid #888;
    line-height: 18px;
}

.gif-client button:disabled {
    color: #999;
}

.frames {
    margin: 2px 0 15px;
    font-size: 11px;
}

.gif-client h2 {
    display: flex;
    align-items: center;
    gap: 2px;
    margin: 0 0 0 1px;
    font-size: 12px;
    font-weight: 400;
}

.gif-client h2::before, .gif-client h2::after {
    content: "";
    width: 10px;
    height: 1px;
    background: #000;
}

.gif-client h2::after {
    flex: 1;
}

.gif-client dl {
    display: grid;
    grid-template-columns: 90px 1fr;
    margin: 0;
}

.gif-client dd {
    margin: 0;
    font-size: 10px;
}

.gif-client small {
    font-size: 10px;
    white-space: pre;
}

.area-row {
    display: flex;
    justify-content: space-between;
    margin: 1px -1px 3px 0;
}

.area-row button {
    width: 66px;
}

.gif-client label {
    display: flex;
    align-items: center;
    gap: 4px;
}

.gif-client input {
    appearance: none;
    width: 15px;
    height: 15px;
    margin-left: 2px;
    border: 2px solid #444;
    border-right: 1px solid #ccc;
    border-bottom: 1px solid #ccc;
    background: #fff;
}

.gif-client input:checked::before {
    content: "";
    display: block;
    width: 5px;
    height: 9px;
    margin: 0 0 0 4px;
    border: solid #000;
    border-width: 0 2px 2px 0;
    transform: rotate(42deg);
}

.gif-client .refresh {
    display: block;
    width: 66px;
    margin: 0 0 20px 1px;
}

.pick-row {
    display: flex;
    align-items: center;
    gap: 3px;
    height: 17px;
}

.pick {
    position: relative;
    width: 61px;
    height: 15px;
    box-shadow: 1px 1px 0 #000;
}

.pick.small {
    width: 49px;
}

.pick select {
    display: block;
    width: 100%;
    height: 15px;
    padding: 0 0 0 11px;
    appearance: none;
    background: #fff;
    border: 1px solid #000;
    border-radius: 0;
    font-size: 10px;
    line-height: 13px;
}

.pick::after {
    content: "";
    position: absolute;
    right: 3px;
    top: 4px;
    border: 4px solid transparent;
    border-top: 7px solid #000;
    border-bottom: none;
}

.options {
    display: flex;
    flex-direction: column;
    gap: 7px;
    margin: 5px 0 4px;
}

.options label {
    height: 15px;
    white-space: nowrap;
}

.cursor {
    position: absolute;
    left: 121px;
    top: 90px;
    width: 12px;
    height: 19px;
}

.badge-clip {
    position: absolute;
    right: 0;
    top: 208px;
    width: 20px;
    height: 52px;
    overflow: hidden;
}

.badge {
    width: 46px;
    height: 46px;
    margin-top: 2px;
    padding-left: 2px;
    background: radial-gradient(circle at 60% 30%, #9d9, #3b4);
    border: 3px solid #eee;
    border-radius: 50%;
    box-shadow: 0 0 0 2px #999;
    color: #fff;
    font: bold 11px/40px "Open Sans", sans-serif;
}
```
FILE: gears.js
```
const svg = document.getElementById('scene');

function add(parent, name, attrs, text) {
    const el = document.createElementNS('http://www.w3.org/2000/svg', name);
    for (const key in attrs) el.setAttribute(key, attrs[key]);
    if (text) el.textContent = text;
    parent.appendChild(el);
    return el;
}

// Contorno de un engranaje. tipW, midW y rootW son medios anchos del diente.
function outline(g) {
    const { x, y, n, phase, tip, root, tipW, midW, rootW } = g;
    const fillet = (tip - root) * 0.14;
    const mid = (tip + root) / 2;
    const step = 2 * Math.PI / n;
    const p = (r, a) => (x + r * Math.cos(a)).toFixed(1) + ' ' + (y + r * Math.sin(a)).toFixed(1);
    const w = rootW / root;
    const corner = Math.min(Math.abs(fillet) / root, step / 2 - w);
    const soft = (tip - root) * 0.07;
    let d = '';
    for (let i = 0; i < n; i++) {
        const a = phase * Math.PI / 180 + i * step;
        d += (i ? 'L' : 'M') + p(root, a - w - corner);
        d += 'Q' + p(root, a - w) + ' ' + p(root + fillet, a - w);
        d += 'Q' + p(mid, a - midW / mid) + ' ' + p(tip - soft, a - tipW / tip);
        d += 'L' + p(tip, a - (tipW - 1) / tip) + 'L' + p(tip, a + (tipW - 1) / tip);
        d += 'L' + p(tip - soft, a + tipW / tip);
        d += 'Q' + p(mid, a + midW / mid) + ' ' + p(root + fillet, a + w);
        d += 'Q' + p(root, a + w) + ' ' + p(root, a + w + corner);
    }
    return d + 'Z';
}

// El origen del lienzo queda en la esquina de la ventana principal
const scene = add(svg, 'g', {
    transform: 'translate(-36 -169)', stroke: '#333', 'stroke-width': 1, 'shape-rendering': 'crispEdges'
});

// Portasatélites
add(scene, 'path', {
    d: 'M350 580a157 157 0 1 0 314 0a157 157 0 1 0 -314 0ZM386 580a121 121 0 1 0 242 0a121 121 0 1 0 -242 0Z',
    fill: '#9cc', 'fill-rule': 'evenodd'
});

// Corona con dentado exterior e interior
const outer = { x: 507, y: 579, n: 50, phase: 0, tip: 383, root: 351, tipW: 6, midW: 10, rootW: 14 };
const inner = { x: 507, y: 579, n: 43, phase: -90, tip: 255, root: 283, tipW: 5, midW: 9, rootW: 17 };
add(scene, 'path', { d: outline(outer) + outline(inner), fill: '#f00', 'fill-rule': 'evenodd' });

function gear(g, color, hole, holeColor) {
    add(scene, 'path', { d: outline(g), fill: color });
    add(scene, 'circle', { cx: g.x, cy: g.y, r: hole, fill: holeColor });
}

gear({ x: 507, y: 579, n: 17, phase: 0, tip: 119, root: 94, tipW: 5, midW: 10, rootW: 12 }, '#f00', 48, '#ccc');
gear({ x: 1065, y: 579, n: 25, phase: -1, tip: 203, root: 171, tipW: 5, midW: 12, rootW: 15 }, '#0f0', 85, '#ccc');

const planets = [[348, 481, 15], [552, 397, 9], [694, 565, 3], [579, 753, 27], [364, 701, 22]];
planets.forEach(([x, y, phase]) => {
    gear({ x, y, n: 12, phase, tip: 90, root: 65, tipW: 4, midW: 11, rootW: 11 }, '#3f3', 36, '#9cc');
});

// Bloque sin refrescar
add(scene, 'path', { d: 'M608 460h64v63h-64z', fill: '#3f3', stroke: 'none' });
add(scene, 'path', { d: 'M655 460h17v63h-17q-18-11-18-31t18-32z', fill: '#9cc', stroke: 'none' });
add(scene, 'path', { d: 'M655 460q-18 12-18 32t18 31', fill: 'none' });
add(scene, 'path', { d: 'M608 466q6 5 0 10M608 503q4 5 0 8', fill: '#9cc' });

// Ejes
function axes(x, y, up, right, green, red) {
    add(scene, 'path', { d: `M${x} ${y}V${up}`, stroke: green, 'stroke-width': 2 });
    add(scene, 'path', { d: `M${x} ${y}H${right}`, stroke: red, 'stroke-width': 2 });
}
function label(x, y, text, color) {
    add(scene, 'text', { x, y, fill: color, stroke: 'none' }, text);
}
axes(507, 579, 543, 543, '#0f0', '#f00');
label(508, 539, 'YC', '#f93');
label(508, 580, 'ZC', '#f93');
label(548, 580, 'XC', '#f93');
axes(91, 926, 897, 120, '#0c9', '#f33');
add(scene, 'circle', { cx: 91, cy: 926, r: 2, fill: 'none', stroke: '#33c' });
label(88, 894, 'Y', '#0a8');
label(125, 930, 'X', '#f33');
```
